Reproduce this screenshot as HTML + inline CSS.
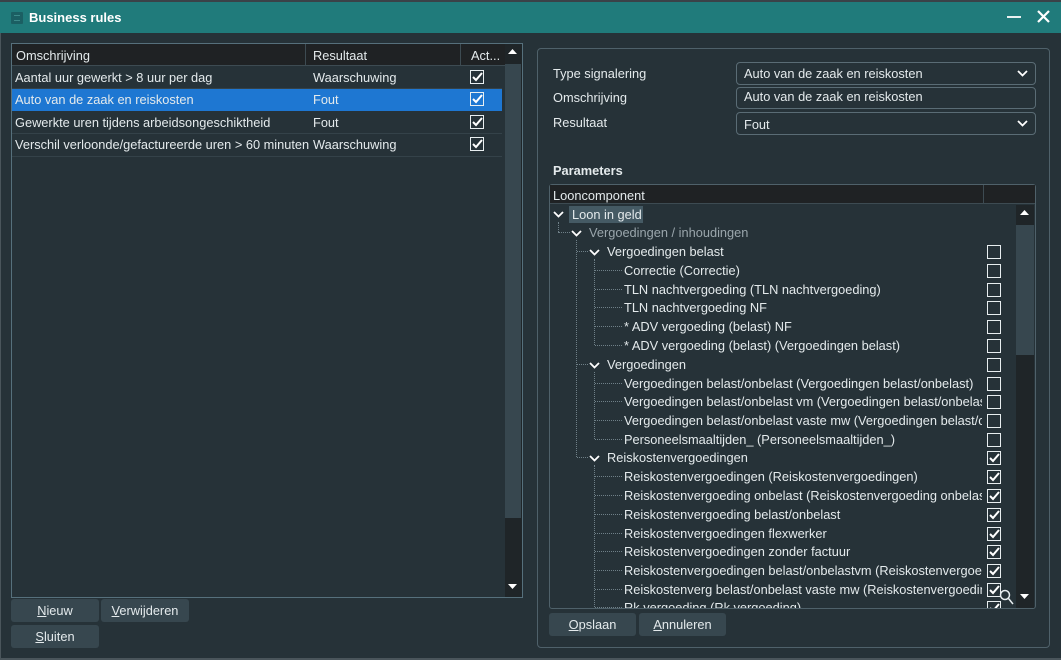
<!DOCTYPE html>
<html><head><meta charset="utf-8"><style>
*{box-sizing:border-box;margin:0;padding:0}
body{width:1061px;height:660px;background:#263238;font-family:"Liberation Sans",Arial,sans-serif;font-size:12.8px;color:#e4eaec;position:relative;overflow:hidden}
.a{position:absolute;white-space:nowrap}
.cb{position:absolute;width:14px;height:14px;border:1.5px solid #e8eef0;background:transparent}
.cb svg{position:absolute;left:0;top:0}
.btn{position:absolute;background:#37474f;border-radius:3px;height:23px;text-align:center;line-height:23px;color:#e4eaec}
.sel{position:absolute;border:1px solid #5a6c75;border-radius:4px;background:#263238}
.dl{position:absolute;border-top:1px dotted #6f8088;height:0}
.dv{position:absolute;border-left:1px dotted #6f8088;width:0}
.chev{position:absolute;width:11px;height:7px}
.lf{position:absolute;left:624px;width:358px;overflow:hidden;white-space:nowrap}
</style></head><body>
<div class="a" style="left:0;top:0;width:1061px;height:2px;background:#3a4248"></div>
<div class="a" style="left:0;top:2px;width:1061px;height:31px;background:#207b7b"></div>
<div class="a" style="left:11px;top:12px;width:12px;height:12px;background:#1b5f63;border-radius:1px"></div>
<div class="a" style="left:14px;top:15px;width:6px;height:1px;background:#3c8a8a"></div>
<div class="a" style="left:14px;top:20px;width:6px;height:1px;background:#3c8a8a"></div>
<div class="a" style="left:29px;top:10px;font-weight:bold;font-size:13px;color:#fff">Business rules</div>
<div class="a" style="left:1007px;top:16px;width:14px;height:2px;background:#e8f0f0"></div>
<svg class="a" style="left:1037px;top:10px" width="13" height="13"><path d="M1 1L12 12M12 1L1 12" stroke="#fff" stroke-width="2.2"/></svg>
<div class="a" style="left:0;top:33px;width:1px;height:627px;background:#4a555b"></div>
<div class="a" style="left:0;top:658px;width:1061px;height:2px;background:#4a555b"></div>

<!-- left table -->
<div class="a" style="left:11px;top:43px;width:512px;height:555px;border:1px solid #56707c;background:#263238"></div>
<div class="a" style="left:12px;top:44px;width:493px;height:22px;background:#1f2224;border-bottom:1px solid #3d4b52"></div>
<div class="a" style="left:305px;top:44px;width:1px;height:22px;background:#3d4b52"></div>
<div class="a" style="left:460px;top:44px;width:1px;height:22px;background:#3d4b52"></div>
<div class="a" style="left:16px;top:48px">Omschrijving</div>
<div class="a" style="left:313px;top:48px">Resultaat</div>
<div class="a" style="left:471px;top:48px">Act...</div>
<div class="a" style="left:505px;top:44px;width:17px;height:553px;background:#1f2528"></div>
<div class="a" style="left:505px;top:64px;width:16px;height:454px;background:#37474f"></div>
<svg class="a" style="left:508px;top:49px" width="9" height="6"><path d="M0 5L4.5 0L9 5Z" fill="#fff"/></svg>
<svg class="a" style="left:508px;top:584px" width="9" height="6"><path d="M0 0L4.5 5L9 0Z" fill="#fff"/></svg>
<div class="a" style="left:12px;top:88px;width:490px;height:23px;background:#1e77d2"></div>
<div class="a" style="left:12px;top:88px;width:490px;height:1px;background:#344249"></div>
<div class="a" style="left:12px;top:133px;width:490px;height:1px;background:#344249"></div>
<div class="a" style="left:12px;top:156px;width:490px;height:1px;background:#344249"></div>
<div class="a" style="left:15px;top:70px">Aantal uur gewerkt &gt; 8 uur per dag</div>
<div class="a" style="left:313px;top:70px">Waarschuwing</div>
<div class="a" style="left:15px;top:92px">Auto van de zaak en reiskosten</div>
<div class="a" style="left:313px;top:92px">Fout</div>
<div class="a" style="left:15px;top:115px">Gewerkte uren tijdens arbeidsongeschiktheid</div>
<div class="a" style="left:313px;top:115px">Fout</div>
<div class="a" style="left:15px;top:137px">Verschil verloonde/gefactureerde uren &gt; 60 minuten</div>
<div class="a" style="left:313px;top:137px">Waarschuwing</div>
<div class="cb" style="left:470px;top:70px"><svg width="12" height="12"><path d="M2 6L5 9L11 2" stroke="#fff" stroke-width="2" fill="none"/></svg></div>
<div class="cb" style="left:470px;top:92px"><svg width="12" height="12"><path d="M2 6L5 9L11 2" stroke="#fff" stroke-width="2" fill="none"/></svg></div>
<div class="cb" style="left:470px;top:115px"><svg width="12" height="12"><path d="M2 6L5 9L11 2" stroke="#fff" stroke-width="2" fill="none"/></svg></div>
<div class="cb" style="left:470px;top:137px"><svg width="12" height="12"><path d="M2 6L5 9L11 2" stroke="#fff" stroke-width="2" fill="none"/></svg></div>

<div class="btn" style="left:11px;top:599px;width:88px"><u>N</u>ieuw</div>
<div class="btn" style="left:101px;top:599px;width:88px"><u>V</u>erwijderen</div>
<div class="btn" style="left:11px;top:625px;width:88px"><u>S</u>luiten</div>

<!-- right panel -->
<div class="a" style="left:537px;top:48px;width:513px;height:600px;border:1px solid #4f616a;border-radius:4px"></div>
<div class="a" style="left:553px;top:66px">Type signalering</div>
<div class="a" style="left:553px;top:90px">Omschrijving</div>
<div class="a" style="left:553px;top:115px">Resultaat</div>
<div class="sel" style="left:736px;top:62px;width:300px;height:23px"></div>
<div class="a" style="left:744px;top:66px">Auto van de zaak en reiskosten</div>
<svg class="a" style="left:1017px;top:70px" width="11" height="7"><path d="M1 1L5.5 5.5L10 1" stroke="#fff" stroke-width="1.8" fill="none"/></svg>
<div class="sel" style="left:736px;top:87px;width:300px;height:22px"></div>
<div class="a" style="left:744px;top:89px">Auto van de zaak en reiskosten</div>
<div class="sel" style="left:736px;top:112px;width:300px;height:23px"></div>
<div class="a" style="left:744px;top:117px">Fout</div>
<svg class="a" style="left:1017px;top:120px" width="11" height="7"><path d="M1 1L5.5 5.5L10 1" stroke="#fff" stroke-width="1.8" fill="none"/></svg>
<div class="a" style="left:553px;top:163px;font-weight:bold">Parameters</div>

<div class="a" style="left:549px;top:184px;width:487px;height:425px;border:1px solid #4f616a;border-radius:3px;overflow:hidden">
</div>
<div class="a" style="left:550px;top:185px;width:485px;height:19px;background:#1f2224;border-bottom:1px solid #3d4b52"></div>
<div class="a" style="left:983px;top:185px;width:1px;height:19px;background:#3d4b52"></div>
<div class="a" style="left:553px;top:188px">Looncomponent</div>
<div class="a" style="left:1016px;top:205px;width:18px;height:403px;background:#1f2528"></div>
<div class="a" style="left:1016px;top:225px;width:18px;height:130px;background:#37474f"></div>
<svg class="a" style="left:1020px;top:210px" width="9" height="6"><path d="M0 5L4.5 0L9 5Z" fill="#fff"/></svg>
<svg class="a" style="left:1020px;top:594px" width="9" height="6"><path d="M0 0L4.5 5L9 0Z" fill="#fff"/></svg>

<div class="a" style="left:550px;top:205px;width:465px;height:403px;overflow:hidden">
<div style="position:absolute;left:-550px;top:-205px;width:1061px;height:660px">
<div class="a" style="left:569px;top:206px;width:74px;height:17px;background:#455a64"></div>
<svg class="chev" style="left:553px;top:211px" width="11" height="7"><path d="M1 1L5.5 5.5L10 1" stroke="#fff" stroke-width="1.8" fill="none"/></svg>
<div class="a" style="left:572px;top:207px">Loon in geld</div>
<div class="dv" style="left:558px;top:222px;height:10px"></div>
<div class="dl" style="left:558px;top:232px;width:12px"></div>
<svg class="chev" style="left:571px;top:230px" width="11" height="7"><path d="M1 1L5.5 5.5L10 1" stroke="#fff" stroke-width="1.8" fill="none"/></svg>
<div class="a" style="left:589px;top:225px;color:#9aa6ac">Vergoedingen / inhoudingen</div>
<div class="dv" style="left:576px;top:240px;height:217px"></div>
<div class="dl" style="left:577px;top:251px;width:11px"></div>
<div class="dl" style="left:577px;top:364px;width:11px"></div>
<div class="dl" style="left:577px;top:457px;width:11px"></div>
<svg class="chev" style="left:589px;top:249px" width="11" height="7"><path d="M1 1L5.5 5.5L10 1" stroke="#fff" stroke-width="1.8" fill="none"/></svg>
<div class="a" style="left:607px;top:244px">Vergoedingen belast</div>
<svg class="chev" style="left:589px;top:362px" width="11" height="7"><path d="M1 1L5.5 5.5L10 1" stroke="#fff" stroke-width="1.8" fill="none"/></svg>
<div class="a" style="left:607px;top:357px">Vergoedingen</div>
<svg class="chev" style="left:589px;top:455px" width="11" height="7"><path d="M1 1L5.5 5.5L10 1" stroke="#fff" stroke-width="1.8" fill="none"/></svg>
<div class="a" style="left:607px;top:450px">Reiskostenvergoedingen</div>

<div class="dv" style="left:594px;top:259px;height:86px"></div>
<div class="dv" style="left:594px;top:372px;height:67px"></div>
<div class="dv" style="left:594px;top:465px;height:150px"></div>

<div class="dl" style="left:595px;top:270px;width:27px"></div><div class="lf" style="top:263px">Correctie (Correctie)</div>
<div class="dl" style="left:595px;top:289px;width:27px"></div><div class="lf" style="top:282px">TLN nachtvergoeding (TLN nachtvergoeding)</div>
<div class="dl" style="left:595px;top:307px;width:27px"></div><div class="lf" style="top:300px">TLN nachtvergoeding NF</div>
<div class="dl" style="left:595px;top:326px;width:27px"></div><div class="lf" style="top:319px">* ADV vergoeding (belast) NF</div>
<div class="dl" style="left:595px;top:345px;width:27px"></div><div class="lf" style="top:338px">* ADV vergoeding (belast) (Vergoedingen belast)</div>
<div class="dl" style="left:595px;top:383px;width:27px"></div><div class="lf" style="top:376px">Vergoedingen belast/onbelast (Vergoedingen belast/onbelast)</div>
<div class="dl" style="left:595px;top:401px;width:27px"></div><div class="lf" style="top:394px">Vergoedingen belast/onbelast vm (Vergoedingen belast/onbelast)</div>
<div class="dl" style="left:595px;top:420px;width:27px"></div><div class="lf" style="top:413px">Vergoedingen belast/onbelast vaste mw (Vergoedingen belast/onbelast)</div>
<div class="dl" style="left:595px;top:439px;width:27px"></div><div class="lf" style="top:432px">Personeelsmaaltijden_ (Personeelsmaaltijden_)</div>
<div class="dl" style="left:595px;top:476px;width:27px"></div><div class="lf" style="top:469px">Reiskostenvergoedingen (Reiskostenvergoedingen)</div>
<div class="dl" style="left:595px;top:495px;width:27px"></div><div class="lf" style="top:488px">Reiskostenvergoeding onbelast (Reiskostenvergoeding onbelast)</div>
<div class="dl" style="left:595px;top:514px;width:27px"></div><div class="lf" style="top:507px">Reiskostenvergoeding belast/onbelast</div>
<div class="dl" style="left:595px;top:533px;width:27px"></div><div class="lf" style="top:526px">Reiskostenvergoedingen flexwerker</div>
<div class="dl" style="left:595px;top:551px;width:27px"></div><div class="lf" style="top:544px">Reiskostenvergoedingen zonder factuur</div>
<div class="dl" style="left:595px;top:570px;width:27px"></div><div class="lf" style="top:563px">Reiskostenvergoedingen belast/onbelastvm (Reiskostenvergoedingen)</div>
<div class="dl" style="left:595px;top:589px;width:27px"></div><div class="lf" style="top:582px">Reiskostenverg belast/onbelast vaste mw (Reiskostenvergoedingen)</div>
<div class="dl" style="left:595px;top:607px;width:27px"></div><div class="lf" style="top:600px">Rk vergoeding (Rk vergoeding)</div>

<div class="cb" style="left:987px;top:245px"></div>
<div class="cb" style="left:987px;top:264px"></div>
<div class="cb" style="left:987px;top:283px"></div>
<div class="cb" style="left:987px;top:301px"></div>
<div class="cb" style="left:987px;top:320px"></div>
<div class="cb" style="left:987px;top:339px"></div>
<div class="cb" style="left:987px;top:358px"></div>
<div class="cb" style="left:987px;top:377px"></div>
<div class="cb" style="left:987px;top:395px"></div>
<div class="cb" style="left:987px;top:414px"></div>
<div class="cb" style="left:987px;top:433px"></div>
<div class="cb" style="left:987px;top:451px"><svg width="12" height="12"><path d="M2 6L5 9L11 2" stroke="#fff" stroke-width="2" fill="none"/></svg></div>
<div class="cb" style="left:987px;top:470px"><svg width="12" height="12"><path d="M2 6L5 9L11 2" stroke="#fff" stroke-width="2" fill="none"/></svg></div>
<div class="cb" style="left:987px;top:489px"><svg width="12" height="12"><path d="M2 6L5 9L11 2" stroke="#fff" stroke-width="2" fill="none"/></svg></div>
<div class="cb" style="left:987px;top:508px"><svg width="12" height="12"><path d="M2 6L5 9L11 2" stroke="#fff" stroke-width="2" fill="none"/></svg></div>
<div class="cb" style="left:987px;top:527px"><svg width="12" height="12"><path d="M2 6L5 9L11 2" stroke="#fff" stroke-width="2" fill="none"/></svg></div>
<div class="cb" style="left:987px;top:545px"><svg width="12" height="12"><path d="M2 6L5 9L11 2" stroke="#fff" stroke-width="2" fill="none"/></svg></div>
<div class="cb" style="left:987px;top:564px"><svg width="12" height="12"><path d="M2 6L5 9L11 2" stroke="#fff" stroke-width="2" fill="none"/></svg></div>
<div class="cb" style="left:987px;top:583px"><svg width="12" height="12"><path d="M2 6L5 9L11 2" stroke="#fff" stroke-width="2" fill="none"/></svg></div>
<div class="cb" style="left:987px;top:601px"><svg width="12" height="12"><path d="M2 6L5 9L11 2" stroke="#fff" stroke-width="2" fill="none"/></svg></div>
</div></div>
<svg class="a" style="left:999px;top:589px" width="16" height="18"><circle cx="6" cy="6" r="4.5" stroke="#e8eef0" stroke-width="1.5" fill="none"/><path d="M9.5 9.5L14 15" stroke="#e8eef0" stroke-width="1.5"/></svg>

<div class="btn" style="left:549px;top:613px;width:87px"><u>O</u>pslaan</div>
<div class="btn" style="left:639px;top:613px;width:87px"><u>A</u>nnuleren</div>
</body></html>
